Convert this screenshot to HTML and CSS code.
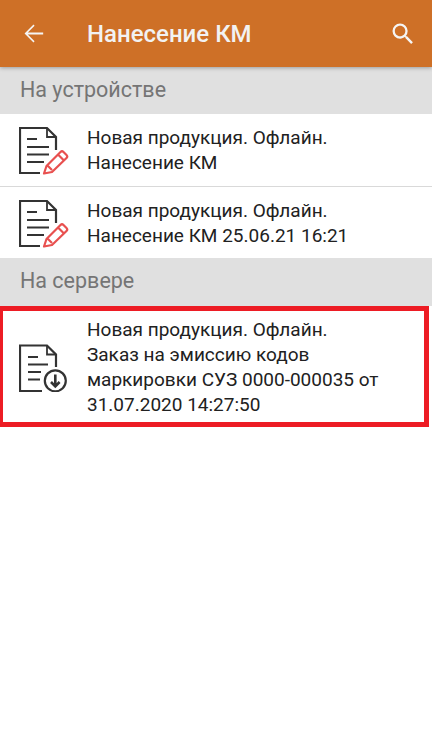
FILE: index.html
```html
<!DOCTYPE html>
<html>
<head>
    <title>Нанесение КМ</title>
    <link rel="stylesheet" href="styles.css">
</head>
<body>
    <div class="toolbar">
        <svg class="back-icon" width="29" height="29" viewBox="0 0 24 24"><path d="M20 11.200H7.300l5.600-5.700L12 4.600 4.600 12l7.400 7.400.9-.9-5.600-5.700H20z"/></svg>
        <div class="toolbar-title">Нанесение КМ</div>
        <svg class="search-icon" width="28" height="28" viewBox="0 0 24 24"><path d="M15.500 14h-.79l-.28-.27A6.470 6.470 0 0 0 16 9.500 6.500 6.500 0 1 0 9.500 16c1.610 0 3.090-.59 4.230-1.570l.27.28v.79l5 4.990L20.490 19l-4.990-5zm-6 0C7.010 14 5 11.990 5 9.500S7.010 5 9.500 5 14 7.010 14 9.500 11.990 14 9.500 14z"/></svg>
    </div>

    <div class="section-title">На устройстве</div>

    <div class="doc-row doc-row-line">
        <svg class="doc-icon" width="50" height="50" viewBox="0 0 50 50">
            <path class="doc-line" d="M21 48H1V3H28L37 12V25"/>
            <path class="doc-line thin" d="M28 3V12H37"/>
            <path class="doc-line" d="M8 14H18M8 22H30M8 29.500H30M8 37H25"/>
            <path class="pencil" d="M25 48.500L27.500 41L41.500 27C42.500 26 43.500 26 44.500 27L47.500 30C48.500 31 48.500 32 47.500 33L33 47ZM29 41L33 45M39 29.500L45 35.500"/>
        </svg>
        <div class="doc-text">Новая продукция. Офлайн.<br>Нанесение КМ</div>
    </div>

    <div class="doc-row doc-row-second">
        <svg class="doc-icon" width="50" height="50" viewBox="0 0 50 50">
            <path class="doc-line" d="M21 48H1V3H28L37 12V25"/>
            <path class="doc-line thin" d="M28 3V12H37"/>
            <path class="doc-line" d="M8 14H18M8 22H30M8 29.500H30M8 37H25"/>
            <path class="pencil" d="M25 48.500L27.500 41L41.500 27C42.500 26 43.500 26 44.500 27L47.500 30C48.500 31 48.500 32 47.500 33L33 47ZM29 41L33 45M39 29.500L45 35.500"/>
        </svg>
        <div class="doc-text">Новая продукция. Офлайн.<br>Нанесение КМ 25.06.21 16:21</div>
    </div>

    <div class="section-title section-title-server">На сервере</div>

    <div class="doc-row doc-row-marked">
        <svg class="doc-icon" width="50" height="50" viewBox="0 0 50 50">
            <path class="doc-line" d="M23 49H1V3.500H28L37 12.500V25"/>
            <path class="doc-line thin" d="M28 3.500V12.500H37"/>
            <path class="doc-line" d="M9 15H19M9 22.500H29M9 30H22M9 37.500H21"/>
            <circle class="doc-line" cx="36.300" cy="38.800" r="10.500"/>
            <path class="doc-line arrow" d="M36.300 32.500V44M32 40L36.300 44.300L40.600 40"/>
        </svg>
        <div class="doc-text">Новая продукция. Офлайн.<br>Заказ на эмиссию кодов маркировки СУЗ 0000-000035 от 31.07.2020 14:27:50</div>
    </div>
</body>
</html>
```
FILE: styles.css
```css
html, body {
    height: 100%;
}

body {
    font-family: Roboto, sans-serif;
    background-color: #fff;
    margin: 0;
}

.toolbar {
    display: flex;
    align-items: center;
    height: 67px;
    padding: 0 15px 0 19px;
    background-color: #ce7027;
    color: #f2f2f2;
    box-shadow: 0 1px 4px rgba(0, 0, 0, 0.3);
    position: relative;
}

.toolbar svg {
    fill: #f5f5f5;
    flex: none;
}

.toolbar-title {
    flex: 1;
    margin-left: 39px;
    font-size: 24px;
    font-weight: 500;
}

.section-title {
    height: 47px;
    line-height: 45px;
    padding-left: 20px;
    background-color: #e0e0e0;
    color: #757575;
    font-size: 21.500px;
}

.section-title-server {
    height: 48px;
    line-height: 46px;
}

.doc-row {
    display: flex;
    align-items: center;
    box-sizing: border-box;
    padding-left: 19px;
}

.doc-row-line {
    height: 73px;
    border-bottom: 1px solid #d9d9d9;
}

.doc-row-second {
    height: 71px;
    padding-top: 1px;
}

.doc-row-marked {
    height: 121px;
    margin-right: 3px;
    padding: 0 40px 0 16px;
    border: solid #ed1c24;
    border-width: 5px 5px 5px 3px;
}

.doc-icon {
    flex: none;
    margin-right: 18px;
}

.doc-line {
    fill: none;
    stroke: #333;
    stroke-width: 2.200;
}

.doc-line.thin {
    stroke-width: 1.800;
}

.doc-line.arrow {
    stroke-width: 2.600;
}

.pencil {
    fill: none;
    stroke: #e8504f;
    stroke-width: 2.200;
    stroke-linejoin: round;
}

.doc-text {
    font-size: 19px;
    line-height: 25px;
    color: #212121;
}
```
